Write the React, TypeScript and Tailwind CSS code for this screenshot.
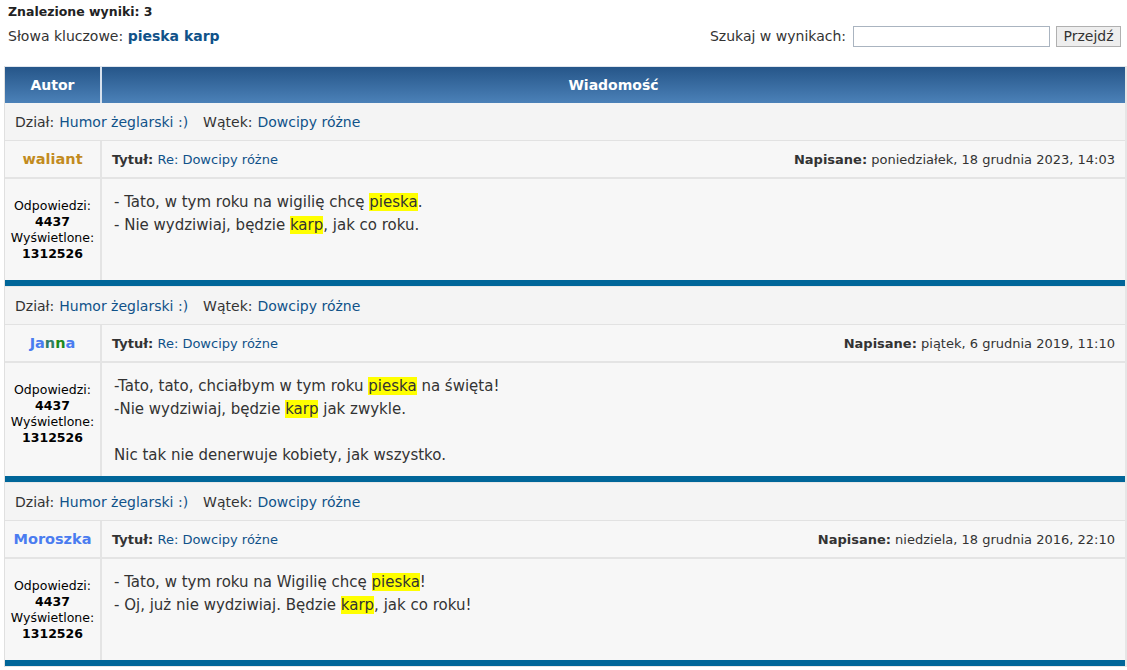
import React from "react";

const HL = ({ children }: { children: React.ReactNode }) => (
  <span className="bg-[#ffff00]">{children}</span>
);

type Post = {
  name: React.ReactNode;
  date: string;
  lines: React.ReactNode[];
};

const posts: Post[] = [
  {
    name: <span className="text-[#c28b1e]">waliant</span>,
    date: "poniedziałek, 18 grudnia 2023, 14:03",
    lines: [
      <>- Tato, w tym roku na wigilię chcę <HL>pieska</HL>.</>,
      <>- Nie wydziwiaj, będzie <HL>karp</HL>, jak co roku.</>,
    ],
  },
  {
    name: (
      <>
        <span className="text-[#4a7cf0]">Ja</span>
        <span className="text-[#2f7d6a]">n</span>
        <span className="text-[#1c8a1c]">n</span>
        <span className="text-[#4a7cf0]">a</span>
      </>
    ),
    date: "piątek, 6 grudnia 2019, 11:10",
    lines: [
      <>-Tato, tato, chciałbym w tym roku <HL>pieska</HL> na święta!</>,
      <>-Nie wydziwiaj, będzie <HL>karp</HL> jak zwykle.</>,
      <>&nbsp;</>,
      <>Nic tak nie denerwuje kobiety, jak wszystko.</>,
    ],
  },
  {
    name: <span className="text-[#4a7cf0]">Moroszka</span>,
    date: "niedziela, 18 grudnia 2016, 22:10",
    lines: [
      <>- Tato, w tym roku na Wigilię chcę <HL>pieska</HL>!</>,
      <>- Oj, już nie wydziwiaj. Będzie <HL>karp</HL>, jak co roku!</>,
    ],
  },
];

function PostBlock({ p }: { p: Post }) {
  return (
    <div>
      <div className="h-[38px] flex items-center px-[10px] pt-[1px] bg-[#f4f4f4] border-b border-[#e2e2e2] text-[14px]">
        <span>Dział: </span>
        <span className="text-[#105289] ml-[5px]">Humor żeglarski :)</span>
        <span className="ml-[15px]">Wątek: </span>
        <span className="text-[#105289] ml-[5px]">Dowcipy różne</span>
      </div>
      <div className="grid grid-cols-[95px_1fr] gap-x-[2px] bg-[#e4e4e4]">
        <div className="h-[36px] flex items-center justify-center pt-[1px] bg-[#f7f7f7] text-[14.5px] font-bold">
          {p.name}
        </div>
        <div className="h-[36px] flex items-center justify-between pt-[1px] px-[10px] bg-[#f7f7f7] text-[13px]">
          <div>
            <span className="font-bold">Tytuł:</span>{" "}
            <span className="text-[#105289]">Re: Dowcipy różne</span>
          </div>
          <div>
            <span className="font-bold">Napisane:</span> {p.date}
          </div>
        </div>
        <div className="col-span-2 h-[2px] bg-[#e4e4e4]"></div>
        <div className="min-h-[101px] bg-[#f7f7f7] pt-[19px] text-center text-[12.5px] leading-[16px] text-black">
          <div>Odpowiedzi:</div>
          <div className="font-bold">4437</div>
          <div>Wyświetlone:</div>
          <div className="font-bold">1312526</div>
        </div>
        <div className="min-h-[101px] bg-[#f7f7f7] pt-[12px] pb-[9px] px-[12px] text-[15px] leading-[23px]">
          {p.lines.map((l, i) => (
            <div key={i}>{l}</div>
          ))}
        </div>
      </div>
      <div className="h-[6px] bg-[#006699] border-b border-[#e8e8e8] box-content"></div>
    </div>
  );
}

export default function App() {
  return (
    <div className="w-[1127px] min-h-[670px] bg-white text-[#333] font-['DejaVu_Sans',Verdana,sans-serif]">
      <div className="pl-[8px] pr-[6px] pt-[4px]">
        <div className="text-[12.5px] font-bold leading-[16px] text-[#222]">Znalezione wyniki: 3</div>
        <div className="flex items-center justify-between mt-[5px] h-[22px]">
          <div className="text-[14px]">
            Słowa kluczowe: <span className="font-bold text-[#105289]">pieska karp</span>
          </div>
          <div className="flex items-center text-[14px]">
            <span className="mr-[7px]">Szukaj w wynikach:</span>
            <input className="w-[197px] h-[21px] border border-[#aab4c0] bg-white outline-none" />
            <button className="ml-[6px] h-[21px] w-[65px] border border-[#b0b0b0] bg-[#eeeeee] text-[14px] leading-[19px] text-[#333]">
              Przejdź
            </button>
          </div>
        </div>
      </div>
      <div className="ml-[4px] mt-[19px] w-[1123px] border-l border-[#e0e0e0] border-r-2 border-r-[#e6e6e6]">
        <div className="grid grid-cols-[95px_1fr] gap-x-[2px] bg-[#d8e2ee] border-t border-[#e0e6ee] h-[37px]">
          <div className="flex items-center justify-center bg-gradient-to-b from-[#265689] to-[#4b81b8] text-white font-bold text-[14px]">
            Autor
          </div>
          <div className="flex items-center justify-center bg-gradient-to-b from-[#265689] to-[#4b81b8] text-white font-bold text-[14px]">
            Wiadomość
          </div>
        </div>
        {posts.map((p, i) => (
          <PostBlock key={i} p={p} />
        ))}
      </div>
    </div>
  );
}
